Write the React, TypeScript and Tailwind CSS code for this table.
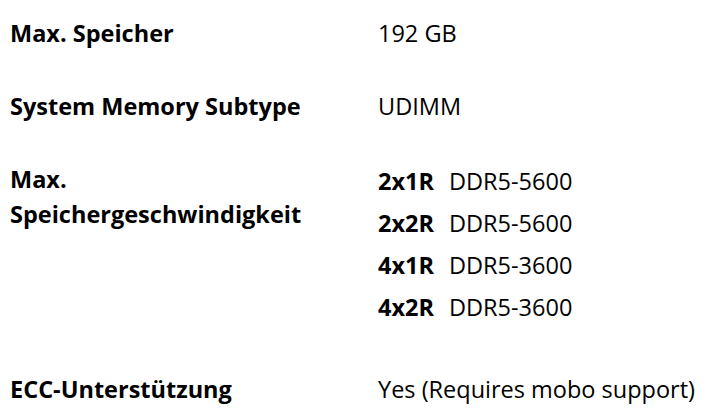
const speeds = [
  { config: "2x1R", speed: "DDR5-5600" },
  { config: "2x2R", speed: "DDR5-5600" },
  { config: "4x1R", speed: "DDR5-3600" },
  { config: "4x2R", speed: "DDR5-3600" },
];

export default function App() {
  return (
    <div className="w-[706px] h-[412px] overflow-hidden bg-white text-black font-['Open_Sans',sans-serif] text-[23.5px]">
      <dl className="flex flex-col pt-[16px] pl-[10px]">
        <div className="flex">
          <dt className="w-[368px] font-bold leading-[34px]">Max. Speicher</dt>
          <dd className="leading-[34px]">192 GB</dd>
        </div>

        <div className="flex mt-[39px]">
          <dt className="w-[368px] font-bold leading-[34px]">System Memory Subtype</dt>
          <dd className="leading-[34px]">UDIMM</dd>
        </div>

        <div className="flex mt-[37px]">
          <dt className="w-[368px] font-bold leading-[35px] pt-[2px]">
            Max.
            <br />
            Speichergeschwindigkeit
          </dt>
          <dd className="flex flex-col">
            {speeds.map((s) => (
              <div key={s.config} className="flex leading-[42px]">
                <span className="w-[71px] font-bold">{s.config}</span>
                <span>{s.speed}</span>
              </div>
            ))}
          </dd>
        </div>

        <div className="flex mt-[44px]">
          <dt className="w-[368px] font-bold leading-[34px]">ECC-Unterstützung</dt>
          <dd className="leading-[34px]">Yes (Requires mobo support)</dd>
        </div>
      </dl>
    </div>
  );
}
